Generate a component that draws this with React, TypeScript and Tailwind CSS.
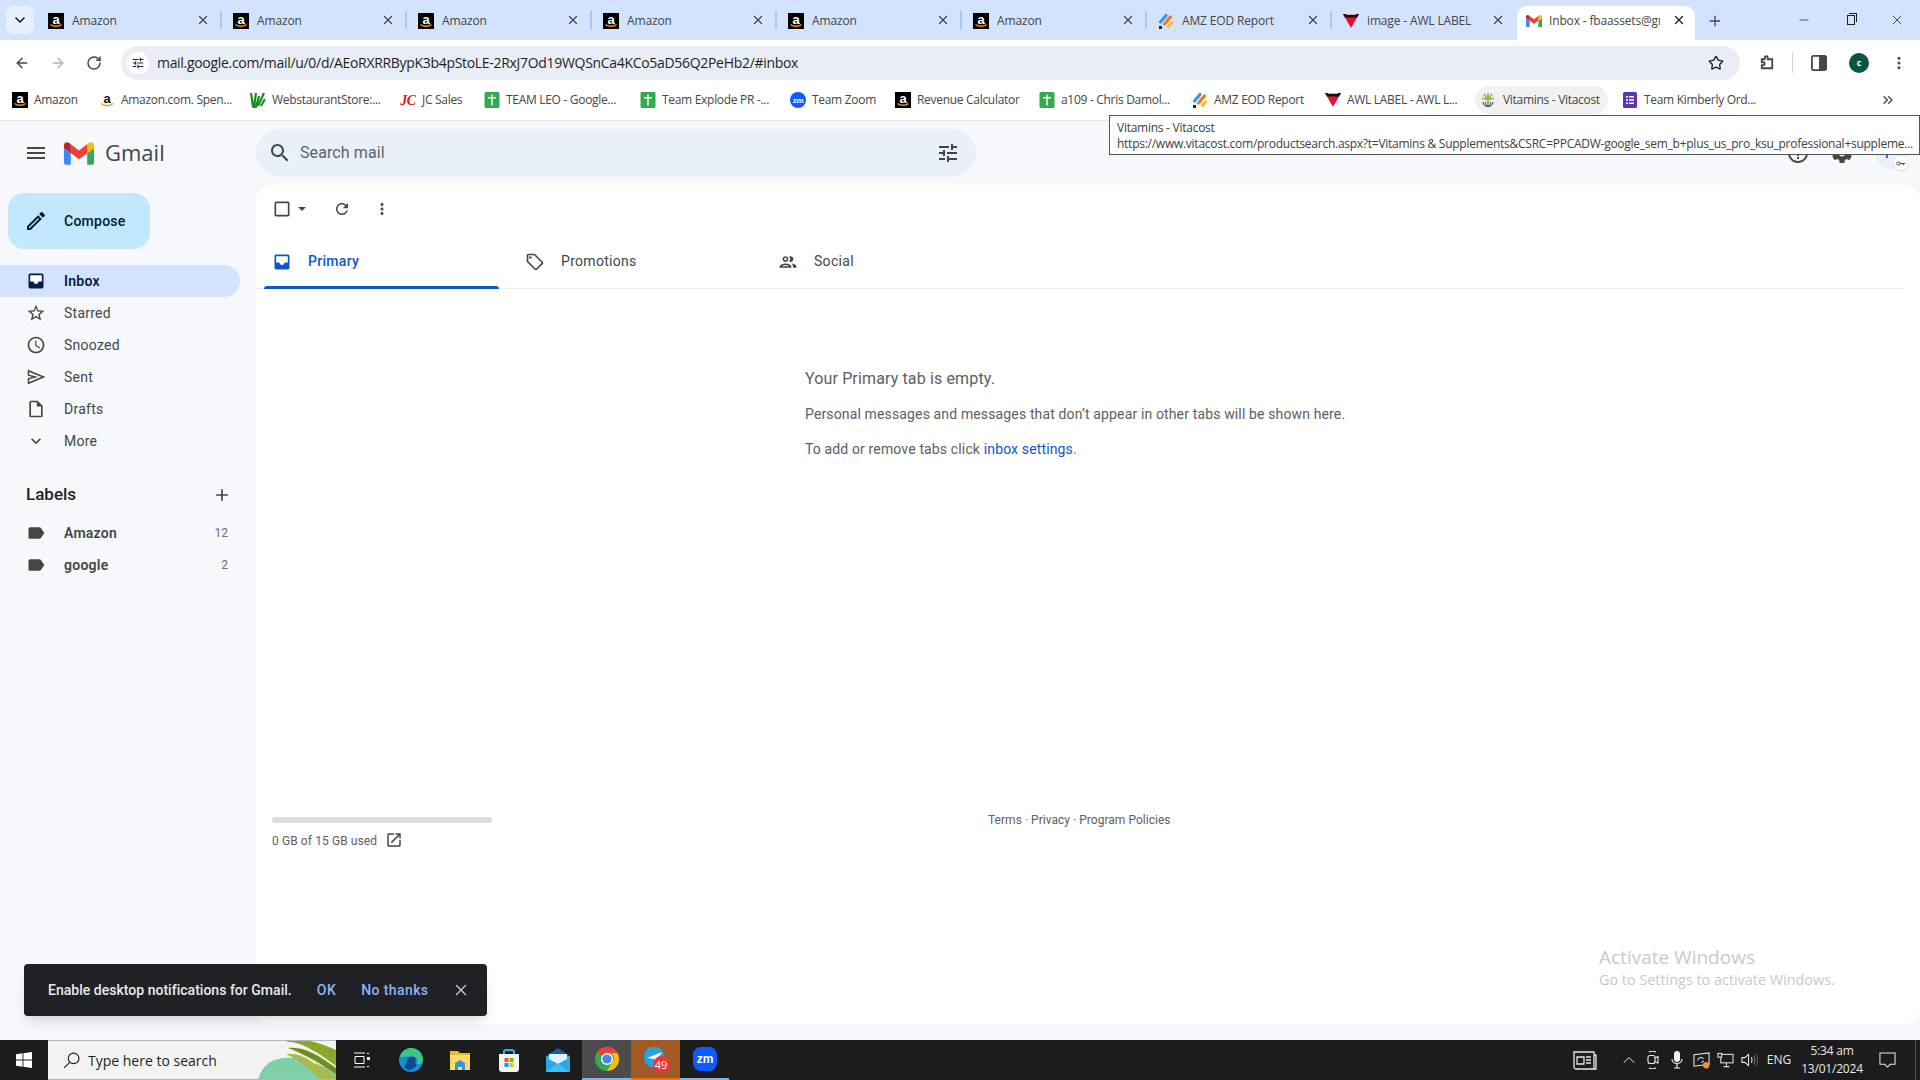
import { ArrowLeft, ArrowRight, ChevronDown, ChevronUp, ChevronsRight, EllipsisVertical, Minus, Plus, RotateCw, Star, X } from "lucide-react";
import type { ReactNode } from "react";

const M = ({ d, className = "w-5 h-5", fill = "#444746" }: { d: string; className?: string; fill?: string }) => (
  <svg viewBox="0 0 24 24" className={`${className} shrink-0`} fill={fill} fillRule="evenodd">
    <path d={d} />
  </svg>
);

const icons = {
  menu: "M3 18h18v-2H3v2zm0-5h18v-2H3v2zm0-7v2h18V6H3z",
  star: "M22 9.24l-7.19-.62L12 2 9.19 8.63 2 9.24l5.46 4.73L5.82 21 12 17.27 18.18 21l-1.63-7.03L22 9.24zM12 15.4l-3.76 2.27 1-4.28-3.32-2.88 4.38-.38L12 6.1l1.71 4.04 4.38.38-3.32 2.88 1 4.28L12 15.4z",
  clock: "M11.99 2C6.47 2 2 6.48 2 12s4.47 10 9.99 10C17.52 22 22 17.52 22 12S17.52 2 11.99 2zM12 20c-4.42 0-8-3.58-8-8s3.58-8 8-8 8 3.58 8 8-3.58 8-8 8zm.5-13H11v6l5.25 3.15.75-1.23-4.5-2.67z",
  draft: "M14 2H6c-1.1 0-1.99.9-1.99 2L4 20c0 1.1.89 2 1.99 2H18c1.1 0 2-.9 2-2V8l-6-6zM6 20V4h7v5h5v11H6z",
  more: "M16.59 8.59L12 13.17 7.41 8.59 6 10l6 6 6-6z",
  label: "M17.63 5.84C17.27 5.33 16.67 5 16 5L5 5.01C3.9 5.01 3 5.9 3 7v10c0 1.1.9 1.99 2 1.99L16 19c.67 0 1.27-.33 1.63-.84L22 12l-4.37-6.16z",
  add: "M19 13h-6v6h-2v-6H5v-2h6V5h2v6h6v2z",
  search: "M15.5 14h-.79l-.28-.27C15.41 12.59 16 11.11 16 9.5 16 5.91 13.09 3 9.5 3S3 5.91 3 9.5 5.91 16 9.5 16c1.61 0 3.09-.59 4.23-1.57l.27.28v.79l5 4.99L20.49 19l-4.99-5zm-6 0C7.01 14 5 11.99 5 9.5S7.01 5 9.5 5 14 7.01 14 9.5 11.99 14 9.5 14z",
  tune: "M3 17v2h6v-2H3zM3 5v2h10V5H3zm10 16v-2h8v-2h-8v-2h-2v6h2zM7 9v2H3v2h4v2h2V9H7zm14 4v-2H11v2h10zm-6-4h2V7h4V5h-4V3h-2v6z",
  refresh: "M17.65 6.35C16.2 4.9 14.21 4 12 4c-4.42 0-7.99 3.58-7.99 8s3.57 8 7.99 8c3.73 0 6.84-2.55 7.73-6h-2.08c-.82 2.33-3.04 4-5.65 4-3.31 0-6-2.69-6-6s2.69-6 6-6c1.66 0 3.14.69 4.22 1.78L13 11h7V4l-2.35 2.35z",
  dots: "M12 8c1.1 0 2-.9 2-2s-.9-2-2-2-2 .9-2 2 .9 2 2 2zm0 2c-1.1 0-2 .9-2 2s.9 2 2 2 2-.9 2-2-.9-2-2-2zm0 6c-1.1 0-2 .9-2 2s.9 2 2 2 2-.9 2-2-.9-2-2-2z",
  people: "M9 13.75c-2.34 0-7 1.17-7 3.5V19h14v-1.75c0-2.33-4.66-3.5-7-3.5zM4.34 17c.84-.58 2.87-1.25 4.66-1.25s3.82.67 4.66 1.25H4.34zM9 12c1.93 0 3.5-1.57 3.5-3.5S10.93 5 9 5 5.5 6.57 5.5 8.5 7.07 12 9 12zm0-5c.83 0 1.5.67 1.5 1.5S9.83 10 9 10s-1.5-.67-1.5-1.5S8.17 7 9 7zm7.04 6.81c1.16.84 1.96 1.96 1.96 3.44V19h4v-1.75c0-2.02-3.5-3.17-5.96-3.44zM15 12c1.93 0 3.5-1.57 3.5-3.5S16.93 5 15 5c-.54 0-1.04.13-1.5.35.63.89 1 1.98 1 3.15s-.37 2.26-1 3.15c.46.22.96.35 1.5.35z",
  tag: "M21.41 11.58l-9-9C12.05 2.22 11.55 2 11 2H4c-1.1 0-2 .9-2 2v7c0 .55.22 1.05.59 1.42l9 9c.36.36.86.58 1.41.58s1.05-.22 1.41-.59l7-7c.37-.36.59-.86.59-1.41s-.23-1.06-.59-1.42zM13 20.01L4 11V4h7v-.01l9 9-7 7.02zM6.5 5A1.5 1.5 0 1 0 6.5 8 1.5 1.5 0 1 0 6.5 5z",
  edit: "M14.06 9.02l.92.92L5.92 19H5v-.92l9.06-9.06M17.66 3c-.25 0-.51.1-.7.29l-1.83 1.83 3.75 3.75 1.83-1.83c.39-.39.39-1.02 0-1.41l-2.34-2.34c-.2-.2-.45-.29-.71-.29zm-3.6 3.19L3 17.25V21h3.75L17.81 9.94l-3.75-3.75z",
  open: "M19 19H5V5h7V3H5c-1.11 0-2 .9-2 2v14c0 1.1.89 2 2 2h14c1.1 0 2-.9 2-2v-7h-2v7zM14 3v2h3.59l-9.83 9.83 1.41 1.41L19 6.41V10h2V3h-7z",
  help: "M11 18h2v-2h-2v2zm1-16C6.48 2 2 6.48 2 12s4.48 10 10 10 10-4.48 10-10S17.52 2 12 2zm0 18c-4.41 0-8-3.59-8-8s3.59-8 8-8 8 3.59 8 8-3.59 8-8 8zm0-14c-2.21 0-4 1.79-4 4h2c0-1.1.9-2 2-2s2 .9 2 2c0 2-3 1.75-3 5h2c0-2.25 3-2.5 3-5 0-2.21-1.79-4-4-4z",
  gear: "M19.43 12.98c.04-.32.07-.64.07-.98s-.03-.66-.07-.98l2.11-1.65c.19-.15.24-.42.12-.64l-2-3.46c-.12-.22-.39-.3-.61-.22l-2.49 1c-.52-.4-1.08-.73-1.69-.98l-.38-2.65C14.46 2.18 14.25 2 14 2h-4c-.25 0-.46.18-.49.42l-.38 2.65c-.61.25-1.17.59-1.69.98l-2.49-1c-.23-.09-.49 0-.61.22l-2 3.46c-.13.22-.07.49.12.64l2.11 1.65c-.04.32-.07.65-.07.98s.03.66.07.98l-2.11 1.65c-.19.15-.24.42-.12.64l2 3.46c.12.22.39.3.61.22l2.49-1c.52.4 1.08.73 1.69.98l.38 2.65c.03.24.24.42.49.42h4c.25 0 .46-.18.49-.42l.38-2.65c.61-.25 1.17-.59 1.69-.98l2.49 1c.23.09.49 0 .61-.22l2-3.46c.12-.22.07-.49-.12-.64l-2.11-1.65zM12 15.5c-1.93 0-3.5-1.57-3.5-3.5s1.57-3.5 3.5-3.5 3.5 1.57 3.5 3.5-1.57 3.5-3.5 3.5z",
};

const SentIcon = () => (
  <svg viewBox="0 0 24 24" className="w-5 h-5 shrink-0" fill="none" stroke="#444746" strokeWidth="1.9">
    <path d="M3 4.5 21 12 3 19.5V14.2L11 12 3 9.8z" />
  </svg>
);

const InboxFilled = ({ color }: { color: string }) => (
  <svg viewBox="0 0 24 24" className="w-5 h-5 shrink-0">
    <path fill={color} d="M19 3H5c-1.1 0-2 .9-2 2v14c0 1.1.9 2 2 2h14c1.1 0 2-.9 2-2V5c0-1.1-.9-2-2-2z" />
    <path fill="#fff" d="M5 5h14v7.5h-4c0 1.66-1.34 3-3 3s-3-1.34-3-3H5z" />
  </svg>
);

/* favicons */
const AmazonFav = () => (
  <svg viewBox="0 0 16 16" className="w-4 h-4 shrink-0">
    <rect width="16" height="16" fill="#000" />
    <text x="8" y="10.5" textAnchor="middle" fontSize="13" fontWeight="700" fontFamily="Liberation Sans" fill="#fff">a</text>
    <path d="M2.5 11.5c3 2.4 8 2.4 11 0" stroke="#f90" strokeWidth="1.4" fill="none" />
  </svg>
);
const AmazonComFav = () => (
  <svg viewBox="0 0 16 16" className="w-4 h-4 shrink-0">
    <text x="8" y="10.5" textAnchor="middle" fontSize="13" fontWeight="700" fontFamily="Liberation Sans" fill="#111">a</text>
    <path d="M2 11.5c3 3 9 3 12 0" stroke="#f90" strokeWidth="1.5" fill="none" />
  </svg>
);
const WebstaurantFav = () => (
  <svg viewBox="0 0 16 16" className="w-4 h-4 shrink-0">
    <path d="M1 1 3 15M6 1 4 15h2L9 4M8 14 14 1M11 14l4-7" stroke="#1c8a1c" strokeWidth="2.2" fill="none" />
  </svg>
);
const JcFav = () => (
  <svg viewBox="0 0 16 16" className="w-4 h-4 shrink-0">
    <text x="8" y="12.5" textAnchor="middle" fontSize="14" fontWeight="900" fontStyle="italic" fontFamily="Liberation Serif" fill="#e01b24">JC</text>
  </svg>
);
const SheetFav = () => (
  <svg viewBox="0 0 16 16" className="w-4 h-4 shrink-0">
    <rect x="0.5" width="15" height="16" rx="1.5" fill="#34a853" />
    <path d="M7.3 2.5h1.4V5H12v1.4H8.7V13.5H7.3V6.4H4V5h3.3z" fill="#fff" />
  </svg>
);
const ZoomFav = () => (
  <svg viewBox="0 0 16 16" className="w-4 h-4 shrink-0">
    <circle cx="8" cy="8" r="8" fill="#0b5cff" />
    <text x="8" y="10.5" textAnchor="middle" fontSize="8" fontWeight="700" fontFamily="Liberation Sans" fill="#fff">zm</text>
  </svg>
);
const EodFav = () => (
  <svg viewBox="0 0 16 16" className="w-4 h-4 shrink-0" fill="none" strokeLinecap="round" strokeWidth="3.2">
    <path d="M2.5 9 8 2.5" stroke="#2e9bf0" />
    <path d="M6.5 11 12.5 4" stroke="#f97316" />
    <path d="M10.5 13.5 13.5 10" stroke="#fbbf24" />
    <rect x="1" y="13" width="3" height="3" fill="#10204a" stroke="none" />
  </svg>
);
const AwlFav = () => (
  <svg viewBox="0 0 16 16" className="w-4 h-4 shrink-0">
    <path d="M0 1h16L8 15z" fill="#e8112d" />
    <path d="M0 1h16l-2 3.5H2z" fill="#111" />
    <path d="M3 1h10l-.5 1h-9z" fill="#f0a0c0" />
  </svg>
);
const VitacostFav = () => (
  <svg viewBox="0 0 16 16" className="w-4 h-4 shrink-0" fill="none">
    <path d="M8 8 4 2M8 8l4-6M8 8 2 6M8 8l6-2M8 8V1" stroke="#8bc34a" strokeWidth="1.8" />
    <path d="M3 10c0 6 10 6 10 0M8 9v6M5 10l2 5M11 10l-2 5" stroke="#444" strokeWidth="1" />
  </svg>
);
const FormsFav = () => (
  <svg viewBox="0 0 16 16" className="w-4 h-4 shrink-0">
    <rect x="1" width="14" height="16" rx="1.5" fill="#5e35b1" />
    <path d="M4 4h2v1.5H4zM7 4h5v1.5H7zM4 7.3h2v1.5H4zM7 7.3h5v1.5H7zM4 10.6h2v1.5H4zM7 10.6h5v1.5H7z" fill="#fff" />
  </svg>
);
const GmailLogo = ({ className }: { className: string }) => (
  <svg viewBox="52 42 88 66" className={`${className} shrink-0`}>
    <path fill="#4285f4" d="M58 108h14V74L52 59v43c0 3.32 2.69 6 6 6" />
    <path fill="#34a853" d="M120 108h14c3.32 0 6-2.69 6-6V59l-20 15" />
    <path fill="#fbbc04" d="M120 48v26l20-15v-8c0-7.42-8.47-11.65-14.4-7.2" />
    <path fill="#ea4335" d="M72 74V48l24 18 24-18v26L96 92" />
    <path fill="#c5221f" d="M52 51v8l20 15V48l-5.6-4.2c-5.94-4.45-14.4-.22-14.4 7.2" />
  </svg>
);

const tabs: { title: string; icon: ReactNode }[] = [
  { title: "Amazon", icon: <AmazonFav /> },
  { title: "Amazon", icon: <AmazonFav /> },
  { title: "Amazon", icon: <AmazonFav /> },
  { title: "Amazon", icon: <AmazonFav /> },
  { title: "Amazon", icon: <AmazonFav /> },
  { title: "Amazon", icon: <AmazonFav /> },
  { title: "AMZ EOD Report", icon: <EodFav /> },
  { title: "image - AWL LABEL", icon: <AwlFav /> },
];

const bookmarks: { title: string; icon: ReactNode; w: string }[] = [
  { title: "Amazon", icon: <AmazonFav />, w: "w-[87px]" },
  { title: "Amazon.com. Spen...", icon: <AmazonComFav />, w: "w-[151px]" },
  { title: "WebstaurantStore:...", icon: <WebstaurantFav />, w: "w-[150px]" },
  { title: "JC Sales", icon: <JcFav />, w: "w-[84px]" },
  { title: "TEAM LEO - Google...", icon: <SheetFav />, w: "w-[156px]" },
  { title: "Team Explode PR -...", icon: <SheetFav />, w: "w-[150px]" },
  { title: "Team Zoom", icon: <ZoomFav />, w: "w-[105px]" },
  { title: "Revenue Calculator", icon: <AmazonFav />, w: "w-[144px]" },
  { title: "a109 - Chris Damol...", icon: <SheetFav />, w: "w-[153px]" },
  { title: "AMZ EOD Report", icon: <EodFav />, w: "w-[133px]" },
  { title: "AWL LABEL - AWL L...", icon: <AwlFav />, w: "w-[150px]" },
];

function TabStrip() {
  return (
    <div className="h-10 bg-[#d3e3fd] flex items-end shrink-0">
      <div className="w-[37px] h-10 pt-1.5 pl-1.5">
        <div className="w-7 h-7 rounded-lg bg-[#e8f0fe] flex items-center justify-center">
          <ChevronDown className="w-4 h-4 text-[#1f1f1f]" strokeWidth={2.5} />
        </div>
      </div>
      {tabs.map((t, i) => (
        <div key={i} className="w-[185px] h-[34px] flex items-center pl-[11px] pb-[5px] gap-2 relative">
          {t.icon}
          <span className="text-[12px] tracking-[-0.15px] text-[#444746] whitespace-nowrap">{t.title}</span>
          <X className="w-3.5 h-3.5 text-[#444746] absolute left-[159px] top-[7px]" strokeWidth={2.2} />
          {i < 7 && <div className="absolute right-0 top-[5px] h-[18px] w-[2px] bg-[#a8c7fa]" />}
        </div>
      ))}
      <div className="w-[178px] h-[34px] bg-white rounded-t-[10px] flex items-center pl-[9px] pb-[5px] relative">
        <GmailLogo className="w-4 h-3" />
        <span className="ml-[7px] w-[111px] overflow-hidden text-[12px] tracking-[-0.15px] text-[#444746] whitespace-nowrap">Inbox - fbaassets@gmail.com</span>
        <X className="w-3.5 h-3.5 text-[#1f1f1f] absolute left-[155px] top-[7px]" strokeWidth={2.2} />
      </div>
      <div className="w-10 h-[34px] flex items-center justify-center pb-[5px]">
        <Plus className="w-4 h-4 text-[#444746]" strokeWidth={2} />
      </div>
      <div className="flex-1" />
      <div className="flex h-10 items-center text-[#1f1f1f]">
        <div className="w-[47px] flex justify-center"><Minus className="w-3.5 h-3.5" strokeWidth={1.2} /></div>
        <div className="w-[47px] flex justify-center">
          <div className="w-[8px] h-[10px] border border-[#1f1f1f] relative">
            <div className="absolute -top-[3px] -right-[3px] w-[8px] h-[9px] border-t border-r border-[#1f1f1f]" />
          </div>
        </div>
        <div className="w-[46px] flex justify-center"><X className="w-4 h-4" strokeWidth={1.2} /></div>
      </div>
    </div>
  );
}

function Toolbar() {
  return (
    <div className="h-[45px] bg-white flex items-center shrink-0">
      <div className="w-[121px] flex items-center pl-[14px] gap-[20px] text-[#444746]">
        <ArrowLeft className="w-4 h-4" strokeWidth={2.2} />
        <ArrowRight className="w-4 h-4 text-[#b0b3b8]" strokeWidth={2.2} />
        <RotateCw className="w-4 h-4" strokeWidth={2.2} />
      </div>
      <div className="w-[1619px] h-[34px] rounded-full bg-[#e9eef6] flex items-center pl-[6px] mt-[1px]">
        <div className="w-[22px] h-[22px] rounded-full bg-white flex items-center justify-center">
          <M d={icons.tune} className="w-3.5 h-3.5" fill="#1f1f1f" />
        </div>
        <span className="ml-[8px] text-[14px] tracking-[-0.31px] text-[#1f1f1f] -mt-px">
          mail.google.com/mail/u/0/d/AEoRXRRBypK3b4pStoLE-2RxJ7Od19WQSnCa4KCo5aD56Q2PeHb2/#inbox
        </span>
        <Star className="w-4 h-4 text-[#1f1f1f] ml-auto mr-[16px]" strokeWidth={2} />
      </div>
      <div className="flex-1 flex items-center text-[#444746] pl-[18px]">
        <svg viewBox="0 0 24 24" className="w-[18px] h-[18px]" fill="none" stroke="#444746" strokeWidth="2.4">
          <path d="M5 7h4V5a2 2 0 0 1 4 0v2h6v12H5v-4h2a2 2 0 0 0 0-4H5z" />
        </svg>
        <div className="w-px h-5 bg-[#c4d3ec] ml-[16px]" />
        <svg viewBox="0 0 18 18" className="w-[16px] h-[16px] ml-[18px]">
          <rect x="1" y="1" width="16" height="16" rx="2" fill="none" stroke="#444746" strokeWidth="2" />
          <rect x="9" y="1" width="8" height="16" fill="#444746" />
        </svg>
        <div className="w-5 h-5 rounded-full bg-[#0b5345] ml-[22px] flex items-center justify-center text-[9px] font-bold text-white">c</div>
        <EllipsisVertical className="w-4 h-4 ml-[22px]" strokeWidth={2.6} />
      </div>
    </div>
  );
}

function BookmarkBar() {
  return (
    <div className="h-9 bg-white border-b border-[#e3e3e3] flex items-start shrink-0 pl-[12px] pt-px text-[12px] tracking-[-0.3px] text-[#444746]">
      {bookmarks.map((b) => (
        <div key={b.title} className={`${b.w} h-[28px] flex items-center gap-[6px] whitespace-nowrap`}>
          {b.icon}
          <span>{b.title}</span>
        </div>
      ))}
      <div className="w-[133px] h-[28px] rounded-full bg-[#f1f1f1] flex items-center pl-[5px] gap-[7px] whitespace-nowrap">
        <VitacostFav />
        <span>Vitamins - Vitacost</span>
      </div>
      <div className="ml-[14px] h-[28px] flex items-center gap-[6px] whitespace-nowrap">
        <FormsFav />
        <span>Team Kimberly Ord...</span>
      </div>
      <ChevronsRight className="w-4 h-4 ml-auto mr-[24px] mt-[6px] text-[#444746]" strokeWidth={2} />
    </div>
  );
}

const navItems: { title: string; icon: ReactNode }[] = [
  { title: "Starred", icon: <M d={icons.star} /> },
  { title: "Snoozed", icon: <M d={icons.clock} /> },
  { title: "Sent", icon: <SentIcon /> },
  { title: "Drafts", icon: <M d={icons.draft} /> },
  { title: "More", icon: <M d={icons.more} /> },
];

function Sidebar() {
  return (
    <div className="w-[256px] shrink-0 font-['Roboto',sans-serif]">
      <div className="ml-2 mt-2 w-[142px] h-14 rounded-2xl bg-[#c2e7ff] flex items-center pl-[16px] gap-[16px] text-[14px] font-medium tracking-[0.25px] text-[#001d35]">
        <M d={icons.edit} className="w-6 h-6" fill="#001d35" />
        <span>Compose</span>
      </div>
      <div className="mt-4 tracking-[0.25px]">
        <div className="w-[240px] h-8 rounded-r-full bg-[#d3e3fd] flex items-center pl-[26px] gap-[18px] text-[14px] font-semibold text-[#041e49]">
          <InboxFilled color="#041e49" />
          <span>Inbox</span>
        </div>
        {navItems.map((n) => (
          <div key={n.title} className="w-[240px] h-8 flex items-center pl-[26px] gap-[18px] text-[14px] text-[#444746]">
            {n.icon}
            <span>{n.title}</span>
          </div>
        ))}
      </div>
      <div className="mt-[22px] h-8 w-[240px] flex items-center justify-between pl-[26px] pr-[8px] text-[17px] font-medium text-[#1f1f1f]">
        <span>Labels</span>
        <M d={icons.add} />
      </div>
      <div className="mt-[6px] tracking-[0.25px]">
        {[
          { title: "Amazon", n: "12" },
          { title: "google", n: "2" },
        ].map((l) => (
          <div key={l.title} className="w-[240px] h-8 flex items-center pl-[26px] pr-[12px] gap-[18px] text-[14px] font-semibold text-[#444746]">
            <M d={icons.label} />
            <span className="flex-1">{l.title}</span>
            <span className="text-[12px] font-normal tracking-normal text-[#6b6d70]">{l.n}</span>
          </div>
        ))}
      </div>
    </div>
  );
}

function MailPanel() {
  return (
    <div className="flex-1 h-[839px] bg-white rounded-2xl font-['Roboto',sans-serif]">
      <div className="h-12 flex items-center pl-[16px] text-[#444746]">
        <M d="M19 5v14H5V5h14m0-2H5c-1.1 0-2 .9-2 2v14c0 1.1.9 2 2 2h14c1.1 0 2-.9 2-2V5c0-1.1-.9-2-2-2z" />
        <div className="ml-[6px] w-0 h-0 border-x-4 border-x-transparent border-t-4 border-t-[#444746]" />
        <div className="ml-[27px]"><M d={icons.refresh} className="w-[18px] h-[18px]" /></div>
        <div className="ml-[22px]"><M d={icons.dots} className="w-[18px] h-[18px]" /></div>
      </div>
      <div className="h-[56px] mr-4 border-b border-[#eceef1] flex text-[14px] tracking-[0.3px]">
        <div className="w-[252px] relative flex items-center pl-4 pt-[2px] gap-4 text-[#0b57d0] font-medium">
          <InboxFilled color="#0b57d0" />
          <span>Primary</span>
          <div className="absolute left-2 right-[9px] bottom-[-1px] h-[3px] rounded-t-[3px] bg-[#0b57d0]" />
        </div>
        <div className="w-[253px] flex items-center pl-[17px] pt-[2px] gap-4 text-[#444746]">
          <M d={icons.tag} />
          <span>Promotions</span>
        </div>
        <div className="w-[252px] flex items-center pl-[17px] pt-[2px] gap-[16px] text-[#444746]">
          <M d={icons.people} />
          <span>Social</span>
        </div>
      </div>
      <div className="pl-[549px] pt-[79px] text-[#5e5e5e] tracking-[0.14px]">
        <div className="text-[16px] leading-[22px]">Your Primary tab is empty.</div>
        <div className="mt-[14px] text-[14px] leading-5">Personal messages and messages that don’t appear in other tabs will be shown here.</div>
        <div className="mt-[15px] text-[14px] leading-5">
          To add or remove tabs click <span className="text-[#0b57d0]">inbox settings.</span>
        </div>
      </div>
      <div className="mt-[353px] flex text-[12px] text-[#5e5e5e]">
        <div className="ml-4 w-[220px] pt-[5px]">
          <div className="h-[6px] rounded-full bg-[#dadce0]" />
          <div className="mt-[10px] flex items-center h-4 whitespace-nowrap">
            <span className="tracking-[0.1px]">0 GB of 15 GB used</span>
            <M d={icons.open} className="w-[18px] h-[18px] ml-[8px] -mt-[2px]" />
          </div>
        </div>
        <div className="ml-[496px] leading-4 whitespace-nowrap tracking-[0.03px]">Terms · Privacy · Program Policies</div>
      </div>
    </div>
  );
}

function Gmail() {
  return (
    <div className="h-[919px] bg-[#f6f8fc] shrink-0 relative">
      <div className="h-16 flex items-center">
        <div className="w-[256px] flex items-center pl-[24px]">
          <M d={icons.menu} className="w-6 h-6" />
          <GmailLogo className="ml-[16px] w-[30px] h-[23px]" />
          <span className="ml-[11px] text-[22px] text-[#444746] -mt-[2px]">Gmail</span>
        </div>
        <div className="w-[720px] h-12 rounded-full bg-[#e9f0fa] flex items-center pl-[12px] pr-[16px] font-['Roboto',sans-serif]">
          <M d={icons.search} className="w-6 h-6" />
          <span className="ml-[8px] text-[16px] tracking-[0.1px] text-[#5f6368] -mt-px">Search mail</span>
          <M d={icons.tune} className="w-6 h-6 ml-auto -mt-px" />
        </div>
        <M d={icons.help} className="w-6 h-6 ml-[810px]" />
        <M d={icons.gear} className="w-6 h-6 ml-[20px]" />
        <div className="ml-[21px] w-[32px] h-[32px] rounded-full bg-[#e8f0fe] relative flex items-center justify-center">
          <div className="w-[2px] h-[10px] bg-[#1a73e8] -ml-2" />
          <div className="absolute -right-[1px] -bottom-[1px] w-[14px] h-[14px] rounded-full bg-white shadow flex items-center justify-center">
            <svg viewBox="0 0 12 6" className="w-[10px] h-[5px]" fill="none" stroke="#444746" strokeWidth="1.2">
              <circle cx="3" cy="3" r="2" />
              <path d="M5 3h6M9 3v2" />
            </svg>
          </div>
        </div>
      </div>
      <div className="flex">
        <Sidebar />
        <MailPanel />
      </div>
      {/* snackbar */}
      <div className="absolute left-6 top-[843px] w-[463px] h-[52px] rounded bg-[#202124] shadow-lg flex items-center pl-6 text-[14px] font-medium font-['Roboto',sans-serif] text-[#e8eaed]">
        <span className="tracking-[0.02px]">Enable desktop notifications for Gmail.</span>
        <span className="ml-[25px] tracking-[0.5px] text-[#8ab4f8]">OK</span>
        <span className="ml-[25px] tracking-[0.4px] text-[#8ab4f8]">No thanks</span>
        <X className="w-[18px] h-[18px] ml-[24px] text-[#bdc1c6]" strokeWidth={2} />
      </div>
      {/* watermark */}
      <div className="absolute left-[1599px] top-[827px] text-[#c9c9c9] leading-none whitespace-nowrap">
        <div className="text-[19px]">Activate Windows</div>
        <div className="mt-[6px] text-[14.4px]">Go to Settings to activate Windows.</div>
      </div>
    </div>
  );
}

/* taskbar drawings */
const WinLogo = () => (
  <svg viewBox="0 0 16 16" className="w-4 h-4">
    <path fill="#fff" d="M0 2.2 6.5 1.3v6.3H0zM7.4 1.2 16 0v7.6H7.4zM0 8.4h6.5v6.3L0 13.8zM7.4 8.4H16V16l-8.6-1.2z" />
  </svg>
);
const TaskView = () => (
  <svg viewBox="0 0 16 16" className="w-[16px] h-[16px]" fill="none" stroke="#fff" strokeWidth="1">
    <path d="M0 1h11M0 15h11M1 4.5h9v7H1zM13 1.5h2M13 14.5h2" />
    <rect x="13" y="5" width="3" height="3" fill="#fff" stroke="none" />
  </svg>
);
const Edge = () => (
  <svg viewBox="0 0 24 24" className="w-6 h-6">
    <circle cx="12" cy="12" r="12" fill="#1490d8" />
    <path d="M1 9C3 3 8 0 12 0c7 0 12 5 12 12 0 3-3 5-6 4 2-5-2-9-7-8-4 1-8 1-10 1z" fill="#3ec97a" />
    <path d="M8 13c0-4 6-5 9-3-1 4-1 6 1 7-3 5-9 6-12 3-2-2 2-3 2-7z" fill="#0c4a8a" />
  </svg>
);
const Folder = () => (
  <svg viewBox="0 0 24 24" className="w-6 h-6">
    <path d="M2 3h8l2 2h10v17H2z" fill="#e8b92e" />
    <path d="M2 7h20v15H2z" fill="#fbdc6b" />
    <path d="M7 22v-7l5-3 5 3v7h-3v-3h-4v3z" fill="#3a94d8" />
  </svg>
);
const Store = () => (
  <svg viewBox="0 0 24 24" className="w-6 h-6">
    <path d="M7 8V4a2 2 0 0 1 2-2h6a2 2 0 0 1 2 2v4" fill="none" stroke="#29b6f6" strokeWidth="2" />
    <path d="M2 6h20v15a3 3 0 0 1-3 3H5a3 3 0 0 1-3-3z" fill="#f5f5f5" />
    <rect x="7.5" y="10" width="4" height="4" fill="#f25022" />
    <rect x="12.5" y="10" width="4" height="4" fill="#7fba00" />
    <rect x="7.5" y="15" width="4" height="4" fill="#00a4ef" />
    <rect x="12.5" y="15" width="4" height="4" fill="#ffb900" />
  </svg>
);
const Mail = () => (
  <svg viewBox="0 0 24 24" className="w-6 h-6">
    <path d="M0 8 12 0l12 8v16H0z" fill="#0a64ad" />
    <path d="M0 8h24v16H0z" fill="#28a8ea" />
    <path d="M3 6h18v5l-9 5-9-5z" fill="#e6f2fb" />
    <path d="M0 24 12 15l12 9z" fill="#50d9ff" opacity=".5" />
  </svg>
);
const ChromeIcon = () => (
  <svg viewBox="0 0 24 24" className="w-6 h-6">
    <circle cx="12" cy="12" r="12" fill="#34a853" />
    <path d="M12 0a12 12 0 0 1 10.4 6H12a6 6 0 0 0-5.2 3L1.6 6A12 12 0 0 1 12 0z" fill="#ea4335" />
    <path d="M22.4 6A12 12 0 0 1 12 24l5.2-9A6 6 0 0 0 16 6z" fill="#fbbc04" />
    <circle cx="12" cy="12" r="6" fill="#fff" />
    <circle cx="12" cy="12" r="4.6" fill="#4285f4" />
  </svg>
);
const Telegram = () => (
  <div className="relative w-6 h-6">
    <svg viewBox="0 0 24 24" className="w-6 h-6">
      <circle cx="10" cy="10" r="10.5" fill="#2aa1da" />
      <path d="M3 11 18 5l-6 10-2-3z" fill="#fff" />
    </svg>
    <div className="absolute left-[9px] top-[9px] w-[17px] h-[17px] rounded-full bg-[#ee3237] flex items-center justify-center text-[11px] leading-none text-white">49</div>
  </div>
);
const ZoomApp = () => (
  <svg viewBox="0 0 24 24" className="w-6 h-6">
    <rect width="24" height="24" rx="8" fill="#0b5cff" />
    <text x="12" y="16" textAnchor="middle" fontSize="12" fontWeight="700" fontFamily="Liberation Sans" fill="#fff">zm</text>
  </svg>
);
const BingArt = () => (
  <svg viewBox="0 0 78 40" className="w-[78px] h-10 ml-auto shrink-0">
    <path d="M0 40C4 24 16 16 36 18l42 12v10z" fill="#7fd0a8" />
    <path d="M26 2C42 0 62 14 78 26V10C64 4 46-4 26 2z" fill="#8aa82a" />
    <path d="M30 8c16-2 32 8 48 20v6C60 22 46 14 30 8z" fill="#6e8f1e" />
    <path d="M28 14c16-2 32 10 50 22v4H62C52 28 40 20 28 14z" fill="#a8b94e" />
    <path d="M30 12c10 0 20 6 28 12" fill="none" stroke="#eef2d0" strokeWidth="1.2" />
  </svg>
);

function Tray() {
  return (
    <div className="ml-auto flex items-center h-10 text-[#e8e8e8]">
      <div className="w-10 flex justify-center">
        <svg viewBox="0 0 24 20" className="w-6 h-5" fill="none" stroke="#e8e8e8" strokeWidth="1.3">
          <path d="M1 2h20v17H3a2 2 0 0 1-2-2zM21 5h2v14h-2" />
          <path d="M4 7h7v7H4zM13 7h5M13 10h5M13 13h5" />
        </svg>
      </div>
      <div className="w-3" />
      <div className="w-6 flex justify-center"><ChevronUp className="w-5 h-5" strokeWidth={1.2} /></div>
      <div className="w-6 flex justify-center">
        <svg viewBox="0 0 12 18" className="w-3 h-[18px]" fill="none" stroke="#e8e8e8" strokeWidth="1.1">
          <path d="M2 1c2-1 5-1 7 0M2 17c2 1 5 1 7 0" />
          <rect x="1" y="4.5" width="7" height="8" rx="2" />
          <path d="m8 7 3-1.5v6.5L8 10.5" />
        </svg>
      </div>
      <div className="w-6 flex justify-center">
        <svg viewBox="0 0 12 18" className="w-3 h-[18px]">
          <rect x="3" y="0" width="6" height="11" rx="3" fill="#f1f1f1" />
          <path d="M1 8c0 6 10 6 10 0M6 13v4M3 17h6" fill="none" stroke="#f1f1f1" strokeWidth="1.2" />
        </svg>
      </div>
      <div className="w-6 flex justify-center">
        <svg viewBox="0 0 18 18" className="w-[17px] h-[17px]" fill="none" stroke="#e8e8e8" strokeWidth="1.1">
          <path d="M1 3 17 1v12L1 15z" />
          <path d="M5 9c0-3 4-4 6-2M9 11c2 0 2-1 2-2" />
          <circle cx="14" cy="14" r="3.4" fill="#f7941d" stroke="none" />
        </svg>
      </div>
      <div className="w-6 flex justify-center">
        <svg viewBox="0 0 18 16" className="w-[17px] h-[16px]" fill="none" stroke="#e8e8e8" strokeWidth="1.1">
          <rect x="4" y="2" width="13" height="9" />
          <path d="M10 11v3M7 15h6" />
          <rect x="1" y="1" width="4" height="4" fill="#1c1c1c" />
        </svg>
      </div>
      <div className="w-6 flex justify-center">
        <svg viewBox="0 0 18 16" className="w-[17px] h-[16px]" fill="none" stroke="#e8e8e8" strokeWidth="1.1">
          <path d="M1 5.5h3L8 2v12L4 10.5H1z" />
          <path d="M11 5c1 2 1 4 0 6" />
          <path d="M13.5 3.5c1.6 3 1.6 6 0 9" stroke="#777" />
          <path d="M16 2c2 3.5 2 8.5 0 12" stroke="#555" />
        </svg>
      </div>
      <div className="w-9 text-center text-[12px]">ENG</div>
      <div className="w-[70px] text-center text-[12px] tracking-[-0.2px] leading-[18px]">
        <div>5:34 am</div>
        <div>13/01/2024</div>
      </div>
      <div className="w-10 flex justify-center">
        <svg viewBox="0 0 18 18" className="w-[17px] h-[17px]" fill="none" stroke="#e8e8e8" strokeWidth="1.1">
          <path d="M1 1h16v12h-5l-3 3-3-3H1z" />
        </svg>
      </div>
      <div className="w-2" />
      <div className="w-[5px] h-10 border-l border-[#555]" />
    </div>
  );
}

function Taskbar() {
  const apps = [
    { el: <TaskView />, cls: "" },
    { el: <Edge />, cls: "" },
    { el: <Folder />, cls: "" },
    { el: <Store />, cls: "" },
    { el: <Mail />, cls: "" },
    { el: <ChromeIcon />, cls: "bg-[#4c4c4c] border-b-2 border-[#76b9ed]" },
    { el: <Telegram />, cls: "bg-[#a05a24] border-b-2 border-[#ff6a00]" },
    { el: <ZoomApp />, cls: "border-b-2 border-[#76b9ed]" },
  ];
  return (
    <div className="h-10 bg-[#1c1c1c] flex items-center shrink-0">
      <div className="w-12 flex justify-center"><WinLogo /></div>
      <div className="w-[288px] h-10 bg-[#f3f3f3] border-y border-[#b8b8b8] flex items-center pl-[15px] text-[#1f1f1f] overflow-hidden">
        <svg viewBox="0 0 16 16" className="w-[17px] h-[17px] shrink-0" fill="none" stroke="#1f1f1f" strokeWidth="1.1">
          <circle cx="10" cy="6" r="5" />
          <path d="M6.3 9.7 1 15" />
        </svg>
        <span className="ml-[8px] text-[14px] whitespace-nowrap">Type here to search</span>
        <BingArt />
      </div>
      <div className="flex ml-px">
        {apps.map((a, i) => (
          <div key={i} className={`w-[49px] h-10 flex items-center justify-center ${a.cls}`}>{a.el}</div>
        ))}
      </div>
      <Tray />
    </div>
  );
}

export default function App() {
  return (
    <div className="w-[1920px] h-[1080px] overflow-hidden flex flex-col relative bg-white font-['Open_Sans',sans-serif]">
      <TabStrip />
      <Toolbar />
      <BookmarkBar />
      <Gmail />
      <Taskbar />
      {/* link tooltip */}
      <div className="absolute left-[1109px] top-[115px] w-[811px] h-10 bg-white border border-[#555] pl-[7px] pt-[4px] text-[12px] tracking-[-0.26px] leading-4 text-[#3c4043] whitespace-nowrap overflow-hidden">
        <div>Vitamins - Vitacost</div>
        <div>https://www.vitacost.com/productsearch.aspx?t=Vitamins &amp; Supplements&amp;CSRC=PPCADW-google_sem_b+plus_us_pro_ksu_professional+suppleme...</div>
      </div>
    </div>
  );
}
